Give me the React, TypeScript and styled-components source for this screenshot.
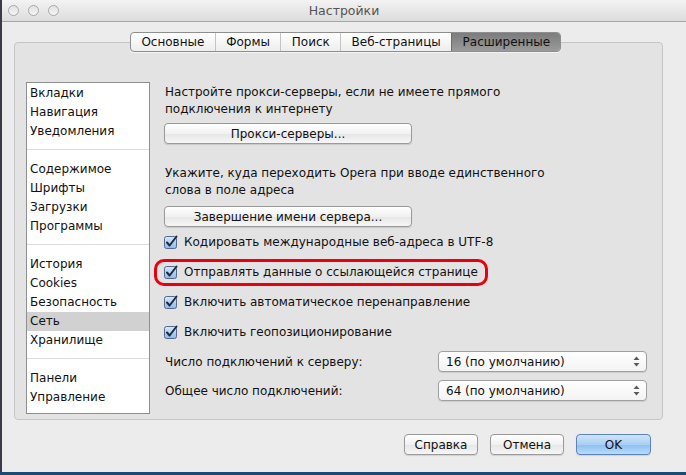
import React from 'react';
import styled, { createGlobalStyle } from 'styled-components';

const Global = createGlobalStyle`
  html, body { margin: 0; padding: 0; background: #1d4a6e; }
  body { font-family: "DejaVu Sans", "Liberation Sans", sans-serif; font-size: 12px; color: #111; }
  *, *::before, *::after { box-sizing: border-box; }
`;

const Window = styled.div`
  width: 686px;
  height: 472px;
  background: #ececec;
  display: flex;
  flex-direction: column;
  border-left: 2px solid #3a3a4a;
`;

const TitleBar = styled.div`
  height: 22px;
  flex: none;
  display: flex;
  align-items: center;
  position: relative;
  background: linear-gradient(#f3f3f3, #dcdcdc);
  border-bottom: 1px solid #a6a6a6;
`;

const Lights = styled.div`
  display: flex;
  gap: 9px;
  padding-left: 6px;
`;

const Light = styled.span`
  width: 11px;
  height: 11px;
  border-radius: 50%;
  border: 1px solid #a9a9a9;
  background: linear-gradient(#e2e2e2, #f4f4f4);
`;

const Title = styled.div`
  position: absolute;
  left: 0;
  right: 0;
  text-align: center;
  color: #555;
  font-size: 12.5px;
`;

const Body = styled.div`
  flex: 1;
  padding: 10px 23px 0 12px;
  display: flex;
  flex-direction: column;
`;

const Tabs = styled.div`
  align-self: flex-start;
  margin-left: 116px;
  display: flex;
  height: 20px;
  border: 1px solid #8e8e8e;
  border-radius: 4px;
  overflow: hidden;
  background: linear-gradient(#ffffff, #ededed);
  position: relative;
  z-index: 1;
  box-shadow: 0 1px 0 rgba(255,255,255,0.6);
`;

const Tab = styled.div<{ $active?: boolean }>`
  padding: 0 10.4px;
  display: flex;
  align-items: center;
  font-size: 12px;
  color: #111;
  border-left: 1px solid ${p => (p.$active ? '#6e6e6e' : '#c4c4c4')};
  background: ${p => (p.$active ? 'linear-gradient(#7c7c7c, #9a9a9a)' : 'transparent')};
  &:first-child { border-left: none; }
`;

const Group = styled.div`
  margin-top: -10px;
  height: 378px;
  border: 1px solid #c6c6c6;
  border-radius: 4px;
  background: #e3e3e3;
  display: flex;
  gap: 14px;
  padding: 39px 0 0 11px;
`;

const Sidebar = styled.div`
  width: 124px;
  height: 332px;
  background: #fff;
  border: 1px solid #8f8f8f;
  padding-top: 1px;
  display: flex;
  flex-direction: column;
`;

const Section = styled.div`
  padding: 0 0 8px;
  border-bottom: 1px solid #dcdcdc;
  margin-bottom: 10px;
  &:last-child { border-bottom: none; margin-bottom: 0; }
`;

const Item = styled.div<{ $selected?: boolean }>`
  height: 19px;
  line-height: 19px;
  padding-left: 3px;
  background: ${p => (p.$selected ? '#d1d1d1' : 'transparent')};
`;

const Content = styled.div`
  flex: 1;
  display: flex;
  flex-direction: column;
  padding-top: 2px;
  padding-right: 15px;
`;

const Para = styled.div`
  line-height: 17px;
  padding-left: 1px;
`;

const PushButton = styled.div<{ $width?: number; $primary?: boolean }>`
  width: ${p => p.$width ?? 248}px;
  height: 21px;
  border-radius: 4px;
  border: 1px solid ${p => (p.$primary ? '#5f83b4' : '#9a9a9a')};
  background: ${p =>
    p.$primary
      ? 'linear-gradient(#cfe4fa 0%, #a9cff5 50%, #8dbff2 51%, #b7dbfb 100%)'
      : 'linear-gradient(#ffffff, #f1f1f1 50%, #e6e6e6 51%, #f6f6f6)'};
  box-shadow: 0 1px 1px rgba(0,0,0,0.12);
  display: flex;
  align-items: center;
  justify-content: center;
  font-size: 12px;
`;

const Spacer = styled.div<{ $h: number }>`
  height: ${p => p.$h}px;
  flex: none;
`;

const CheckRow = styled.div<{ $ring?: boolean }>`
  height: 30px;
  flex: none;
  display: flex;
  align-items: center;
  gap: 6px;
  position: relative;
  ${p =>
    p.$ring &&
    `&::before {
      content: '';
      position: absolute;
      left: -10px;
      top: 2px;
      width: 334px;
      height: 27px;
      border: 3px solid #e8000e;
      border-radius: 10px;
    }`}
`;

const FormRow = styled.div`
  height: 29px;
  flex: none;
  display: flex;
  align-items: center;
  justify-content: space-between;
  padding-left: 1px;
`;

const Select = styled.div`
  width: 209px;
  height: 21px;
  border: 1px solid #a0a0a0;
  border-radius: 4px;
  background: linear-gradient(#ffffff, #f3f3f3);
  box-shadow: 0 1px 1px rgba(0,0,0,0.1);
  display: flex;
  align-items: center;
  justify-content: space-between;
  padding: 0 6px 0 7px;
`;

const Footer = styled.div`
  display: flex;
  justify-content: flex-end;
  gap: 12px;
  padding: 14px 12px 0 0;
`;

const Check = () => (
  <svg width="14" height="14" viewBox="0 0 14 14">
    <defs>
      <linearGradient id="cb" x1="0" y1="0" x2="0" y2="1">
        <stop offset="0" stopColor="#d8e8fb" />
        <stop offset="1" stopColor="#8fb8e8" />
      </linearGradient>
    </defs>
    <rect x="0.5" y="1.5" width="12" height="12" rx="2" fill="url(#cb)" stroke="#55698a" />
    <path d="M3 7.5 L5.6 10.5 L12.5 1.5" fill="none" stroke="#1d2a3f" strokeWidth="2" strokeLinecap="round" strokeLinejoin="round" />
  </svg>
);

const Arrows = () => (
  <svg width="7" height="11" viewBox="0 0 7 11">
    <path d="M0.5 4 L3.5 0.5 L6.5 4 Z" fill="#5a5a5a" />
    <path d="M0.5 7 L3.5 10.5 L6.5 7 Z" fill="#5a5a5a" />
  </svg>
);

const sections = [
  ['Вкладки', 'Навигация', 'Уведомления'],
  ['Содержимое', 'Шрифты', 'Загрузки', 'Программы'],
  ['История', 'Cookies', 'Безопасность', 'Сеть', 'Хранилище'],
  ['Панели', 'Управление'],
];

const checks = [
  'Кодировать международные веб-адреса в UTF-8',
  'Отправлять данные о ссылающейся странице',
  'Включить автоматическое перенаправление',
  'Включить геопозиционирование',
];

export default function App() {
  return (
    <>
      <Global />
      <Window>
        <TitleBar>
          <Lights>
            <Light />
            <Light />
            <Light />
          </Lights>
          <Title>Настройки</Title>
        </TitleBar>
        <Body>
          <Tabs>
            <Tab>Основные</Tab>
            <Tab>Формы</Tab>
            <Tab>Поиск</Tab>
            <Tab>Веб-страницы</Tab>
            <Tab $active>Расширенные</Tab>
          </Tabs>
          <Group>
            <Sidebar>
              {sections.map((s, i) => (
                <Section key={i}>
                  {s.map(name => (
                    <Item key={name} $selected={name === 'Сеть'}>{name}</Item>
                  ))}
                </Section>
              ))}
            </Sidebar>
            <Content>
              <Para>
                Настройте прокси-серверы, если не имеете прямого
                <br />
                подключения к интернету
              </Para>
              <Spacer $h={5} />
              <PushButton>Прокси-серверы...</PushButton>
              <Spacer $h={21} />
              <Para>
                Укажите, куда переходить Opera при вводе единственного
                <br />
                слова в поле адреса
              </Para>
              <Spacer $h={7} />
              <PushButton>Завершение имени сервера...</PushButton>
              {checks.map((c, i) => (
                <CheckRow key={c} $ring={i === 1}>
                  <Check />
                  <span>{c}</span>
                </CheckRow>
              ))}
              <FormRow>
                <span>Число подключений к серверу:</span>
                <Select>
                  <span>16 (по умолчанию)</span>
                  <Arrows />
                </Select>
              </FormRow>
              <FormRow>
                <span>Общее число подключений:</span>
                <Select>
                  <span>64 (по умолчанию)</span>
                  <Arrows />
                </Select>
              </FormRow>
            </Content>
          </Group>
          <Footer>
            <PushButton $width={74}>Справка</PushButton>
            <PushButton $width={74}>Отмена</PushButton>
            <PushButton $width={75} $primary>OK</PushButton>
          </Footer>
        </Body>
      </Window>
    </>
  );
}
